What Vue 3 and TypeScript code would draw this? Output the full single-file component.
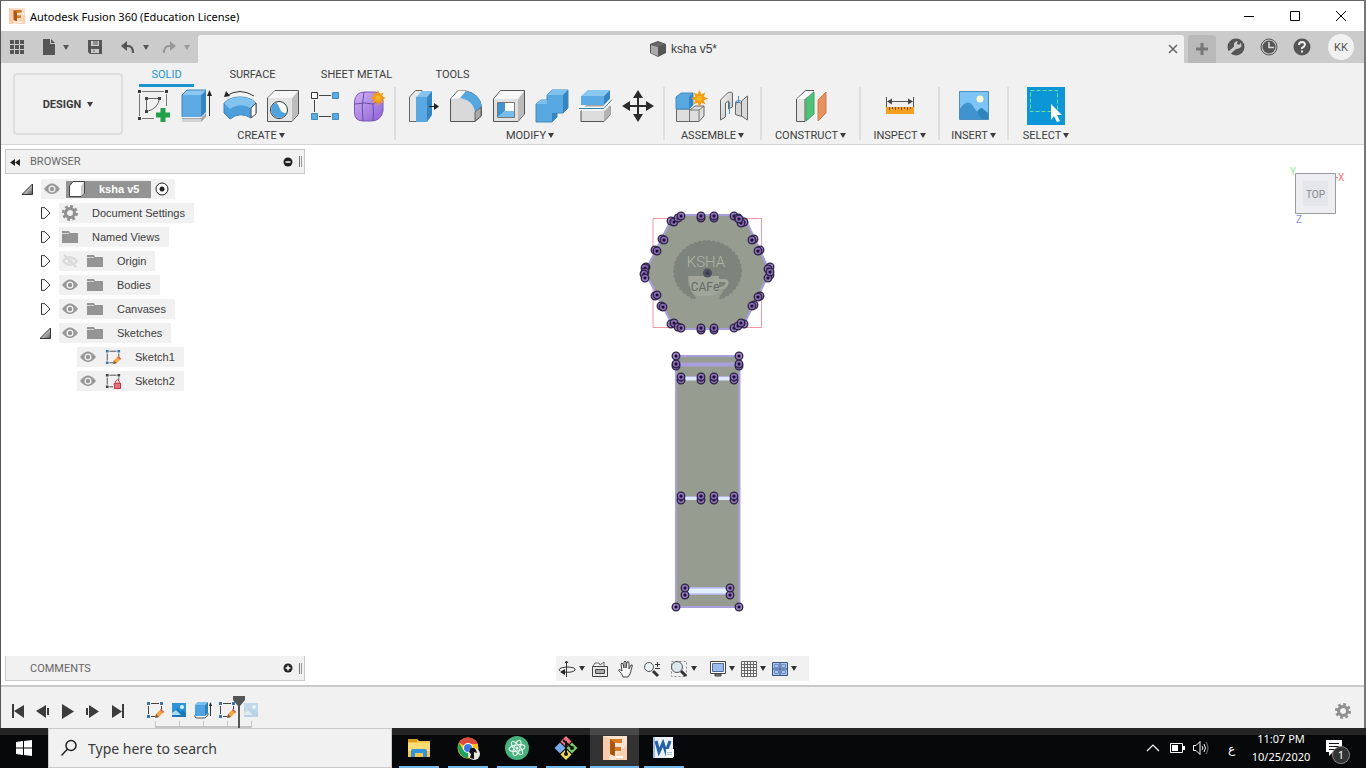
<script setup lang="ts">
import { ref } from 'vue'

interface ToolGroup {
  name: string
  cls: string
  icons: { id: string; label: string }[]
}

interface TreeNode {
  label: string
  arrow: 'closed' | 'open' | 'none'
  level: number
  icons: string[]
}

const tabs = [
  { label: 'SOLID', cls: 't-solid' },
  { label: 'SURFACE', cls: 't-surface' },
  { label: 'SHEET METAL', cls: 't-sheet' },
  { label: 'TOOLS', cls: 't-tools' },
]
const activeTab = ref('SOLID')
const query = ref('')

const groups: ToolGroup[] = [
  {
    name: 'CREATE',
    cls: 'g-create',
    icons: [
      { id: 'sketch', label: 'Create Sketch' },
      { id: 'extrude', label: 'Extrude' },
      { id: 'revolve', label: 'Revolve' },
      { id: 'hole', label: 'Hole' },
      { id: 'pattern', label: 'Pattern' },
      { id: 'form', label: 'Create Form' },
    ],
  },
  {
    name: 'MODIFY',
    cls: 'g-modify',
    icons: [
      { id: 'press', label: 'Press Pull' },
      { id: 'fillet', label: 'Fillet' },
      { id: 'shell', label: 'Shell' },
      { id: 'combine', label: 'Combine' },
      { id: 'split', label: 'Split Body' },
      { id: 'move', label: 'Move' },
    ],
  },
  {
    name: 'ASSEMBLE',
    cls: 'g-assemble',
    icons: [
      { id: 'component', label: 'New Component' },
      { id: 'joint', label: 'Joint' },
    ],
  },
  { name: 'CONSTRUCT', cls: 'g-construct', icons: [{ id: 'plane', label: 'Offset Plane' }] },
  { name: 'INSPECT', cls: 'g-inspect', icons: [{ id: 'measure', label: 'Measure' }] },
  { name: 'INSERT', cls: 'g-insert', icons: [{ id: 'canvas', label: 'Insert Canvas' }] },
  { name: 'SELECT', cls: 'g-select', icons: [{ id: 'select', label: 'Select' }] },
]

const nodes: TreeNode[] = [
  { label: 'Document Settings', arrow: 'closed', level: 1, icons: ['gear'] },
  { label: 'Named Views', arrow: 'closed', level: 1, icons: ['folder'] },
  { label: 'Origin', arrow: 'closed', level: 1, icons: ['eye-off', 'folder'] },
  { label: 'Bodies', arrow: 'closed', level: 1, icons: ['eye', 'folder'] },
  { label: 'Canvases', arrow: 'closed', level: 1, icons: ['eye', 'folder'] },
  { label: 'Sketches', arrow: 'open', level: 1, icons: ['eye', 'folder'] },
  { label: 'Sketch1', arrow: 'none', level: 2, icons: ['eye', 'sk-edit'] },
  { label: 'Sketch2', arrow: 'none', level: 2, icons: ['eye', 'sk-lock'] },
]

const navTools = [
  { id: 'orbit', label: 'Orbit', cls: 'n-orbit', caret: true },
  { id: 'lookat', label: 'Look At', cls: 'n-plain', caret: false },
  { id: 'hand', label: 'Pan', cls: 'n-plain', caret: false },
  { id: 'zoom', label: 'Zoom', cls: 'n-plain', caret: false },
  { id: 'fit', label: 'Fit', cls: 'n-fit', caret: true },
  { id: 'display', label: 'Display Settings', cls: 'n-menu', caret: true },
  { id: 'grid', label: 'Grid and Snaps', cls: 'n-menu', caret: true },
  { id: 'views', label: 'Viewports', cls: 'n-menu', caret: true },
]

const playback = [
  { id: 'first', label: 'Go to start' },
  { id: 'prev', label: 'Step back' },
  { id: 'play', label: 'Play' },
  { id: 'next', label: 'Step forward' },
  { id: 'last', label: 'Go to end' },
]
const features = ['sk-edit', 'tl-canvas', 'tl-extrude', 'sk-edit', 'tl-canvas']

const apps = [
  { id: 'explorer', label: 'File Explorer' },
  { id: 'chrome', label: 'Google Chrome' },
  { id: 'atom', label: 'Atom' },
  { id: 'git', label: 'Git' },
  { id: 'fusion', label: 'Fusion 360' },
  { id: 'word', label: 'Word' },
]

type Point = [number, number]
const hexPoints: Point[] = [
  [671, 221], [674, 222], [678, 218], [681, 216], [701, 218], [701, 216], [714, 218], [714, 216],
  [734, 216], [738, 218], [744, 222], [741, 223], [739, 219],
  [662, 239], [664, 240], [655, 250], [657, 251], [754, 239], [752, 240], [760, 250], [758, 251],
  [646, 267], [645, 268], [645, 272], [644, 274], [645, 278], [770, 267], [768, 269], [770, 275], [768, 278], [770, 272],
  [655, 296], [657, 295], [661, 306], [663, 307], [760, 296], [758, 297], [754, 305], [752, 306],
  [671, 324], [674, 323], [678, 327], [681, 328], [701, 330], [701, 328], [714, 330], [714, 328],
  [734, 328], [738, 326], [744, 324], [741, 323],
]
const bandPoints: Point[] = [
  [676, 356], [739, 356], [676, 366], [676, 364], [739, 366], [739, 364],
  ...[681, 701, 714, 734].flatMap((x): Point[] => [[x, 380], [x, 377], [x, 500], [x, 496]]),
  [685, 595], [685, 588], [730, 595], [730, 588], [676, 607], [739, 607],
]
const sketchPoints = [...hexPoints, ...bandPoints]
</script>

<template>
  <svg class="defs" aria-hidden="true">
    <defs>
      <linearGradient id="metal" x1="0" y1="0" x2="1" y2="1">
        <stop offset="0" stop-color="#f4f4f4" /><stop offset="1" stop-color="#bdbdbd" />
      </linearGradient>
      <linearGradient id="tri" x1="0" y1="0" x2="1" y2="1">
        <stop offset="0.3" stop-color="#eee" /><stop offset="1" stop-color="#555" />
      </linearGradient>
      <linearGradient id="purple" x1="0" y1="0" x2="1" y2="1">
        <stop offset="0" stop-color="#d0b4f2" /><stop offset="1" stop-color="#8c5fd6" />
      </linearGradient>
      <symbol id="star" viewBox="-8 -8 16 16">
        <path d="M0-8 1.800-4 5.600-5.600 4-1.800 8 0 4 1.800 5.600 5.600 1.800 4 0 8-1.800 4-5.600 5.600-4 1.800-8 0-4-1.800-5.600-5.600-1.800-4Z" fill="#f29d12" />
        <circle r="2.600" fill="#fdb528" />
      </symbol>

      <symbol id="sketch" viewBox="0 0 36 36">
        <path d="M6 3.500h22M3.500 6v22M30.500 6v12M6 30.500h12" stroke="#777" fill="none" />
        <path d="M2 2h3v3H2zM29 2h3v3h-3zM2 29h3v3H2z" fill="#3a3a3a" />
        <path d="M10.500 10.500h13Q22 21 10.500 23.500Z" stroke="#666" fill="none" />
        <path d="M9 9h3v3H9zM22 9h3v3h-3zM9 22h3v3H9z" fill="#444" />
        <path d="M24.500 20h5v4.500H34v5h-4.500V34h-5v-4.500H20v-5h4.500z" fill="#23a04a" />
      </symbol>
      <symbol id="extrude" viewBox="0 0 36 36">
        <path d="M3 30h19l5-5v4l-5 5H3z" fill="#a9a9a9" /><path d="M3 31h19v3H3z" fill="#d3d3d3" />
        <path d="M3 7 8 2h19l-5 5z" fill="#8cc8f3" /><path d="M3 7h19v22H3z" fill="#5eabe4" />
        <path d="m22 7 5-5v22l-5 5z" fill="#3585c0" />
        <path d="M3 29V7l5-5h19" stroke="#4586b5" fill="none" />
        <path d="M30.500 5v23" stroke="#333" /><path d="m30.500 2 2.500 6h-5z" fill="#222" />
      </symbol>
      <symbol id="revolve" viewBox="0 0 36 36">
        <path d="M4 8Q18-1 32 8" stroke="#333" fill="none" /><path d="m2 9 2-6 4 5z" fill="#222" />
        <path d="M2 15Q8 9 18 9t16 6v10l-5 5Q18 23 8 31l-6-6z" fill="#4d9fdb" stroke="#3d83b5" />
        <path d="M2 15Q8 9 18 9t16 6l-5 5Q18 14 8 21z" fill="#83c3f0" />
        <path d="m29 20 5-5v11l-5 4z" fill="#fff" stroke="#444" />
      </symbol>
      <symbol id="hole" viewBox="0 0 36 36">
        <path d="M2.500 10 10 2.500h23.500V26L27 33.500H2.500z" fill="#e3e3e3" stroke="#555" />
        <path d="M27 10 33 3v23l-6 7z" fill="#bdbdbd" /><path d="M3 10 10 3h23l-6 7z" fill="#f7f7f7" />
        <circle cx="14" cy="22" r="8.500" fill="#fff" stroke="#333" />
        <path d="M11 14.500a8 8 0 1 0 10.500 10.500Q16 25 15 21t-4-6.500z" fill="#4fa3df" />
      </symbol>
      <symbol id="pattern" viewBox="0 0 36 36">
        <path d="M11 7.500h12M6.500 12v12M11 28.500h12" stroke="#444" />
        <path d="M3.500 4.500h6v6h-6z" fill="#fff" stroke="#333" />
        <path d="M24.500 4.500h6v6h-6zM3.500 25.500h6v6h-6zM24.500 25.500h6v6h-6z" fill="#5babe5" stroke="#4589ba" />
      </symbol>
      <symbol id="form" viewBox="0 0 36 36">
        <path d="M3.500 14Q4 4 14 4h10q8 1 8 9v10q-2 10-12 10h-8q-8 0-8.500-8z" fill="url(#purple)" stroke="#7c57b8" />
        <path d="M4 16q10-2 18 0l9-6M13 4q-3 14-1 29M22 16q1 9 0 17" stroke="#6f4aae" fill="none" />
        <use href="#star" x="19" y="2" width="16" height="16" />
      </symbol>
      <symbol id="press" viewBox="0 0 36 36">
        <path d="m4.500 9 6-6.500H17V27l-6 6.500H4.500z" fill="#e8e8e8" stroke="#666" />
        <path d="m11 9 6-6h10l-5 6z" fill="#84c3f0" /><path d="M11 9h11v25H11z" fill="#5aa8e2" />
        <path d="m22 9 5-6v24l-5 7z" fill="#3484c0" />
        <path d="M24 18.500h7" stroke="#222" /><path d="m29 15 5 3.500-5 3.500z" fill="#222" />
      </symbol>
      <symbol id="fillet" viewBox="0 0 36 36">
        <path d="m2.500 11 7-8H18q14 3 15.500 16v9L27 33.500H2.500z" fill="#d9d9d9" stroke="#555" />
        <path d="m3 11 7-8h8l-6 7z" fill="#fff" />
        <path d="m12 10 6-7q14 3 16 16l-7 5q-2-12-15-14z" fill="#55a7e2" />
        <path d="m27 24 6-5v9l-6 5z" fill="#aaa" stroke="#666" />
      </symbol>
      <symbol id="shell" viewBox="0 0 36 36">
        <path d="m2.500 11 7-8.500h24V26L27 33.500H2.500z" fill="#e1e1e1" stroke="#555" />
        <path d="m27 11 6-8v23l-6 7z" fill="#bbb" /><path d="m3 11 7-8h23l-6 8z" fill="#f8f8f8" />
        <path d="M6.500 14.500h17v15h-17z" fill="#fff" stroke="#777" />
        <path d="M7 15h7v8l-7 6z" fill="#3f93cf" /><path d="M7 29h16v-6h-9z" fill="#75bcef" />
      </symbol>
      <symbol id="combine" viewBox="0 0 36 36">
        <path d="m2 16 5-4h6V7l5-5h16v18l-5 5h-6v4l-5 5H2z" fill="#57a7e1" stroke="#468bbd" />
        <path d="m13 7 5-5h16l-5 5zM2 16l5-4h6v4z" fill="#7cc0ef" />
        <path d="m29 7 5-5v18l-5 5zM18 25h5v4l-5 5z" fill="#3585c1" />
      </symbol>
      <symbol id="split" viewBox="0 0 36 36">
        <path d="m4 23 5-5h24v9l-6 6.500H4z" fill="#dcdcdc" stroke="#555" /><path d="m27 23 6-6v10l-6 6z" fill="#b4b4b4" />
        <path d="m4 8 7-6h22l-6 6z" fill="#8ac8f2" /><path d="M4 8h23v9H4z" fill="#5babe4" /><path d="m27 8 6-6v9l-6 6z" fill="#3685c0" />
        <path d="M2 20.500h25l8-9" stroke="#fff" stroke-width="4" fill="none" />
        <path d="M2 20.500h25l8-9" stroke="#2d7eb8" fill="none" />
      </symbol>
      <symbol id="move" viewBox="0 0 36 36">
        <path d="M18 7v22M7 18h22" stroke="#2b2b2b" stroke-width="2" />
        <path d="m18 2 5 8H13zM18 34l5-8H13zM2 18l8-5v10zM34 18l-8-5v10z" fill="#2b2b2b" />
      </symbol>
      <symbol id="component" viewBox="0 0 36 36">
        <path d="m17 22 5-4h9v10l-5 5.500H3.500V21H17z" fill="#dedede" stroke="#666" />
        <path d="M16.500 21v12M17 22h9v11M26 22l5-4" stroke="#777" fill="none" />
        <path d="m3 9 5-4h12v12l-4 4H3z" fill="#57a7e1" stroke="#468bbd" /><path d="m16 9 4-4v12l-4 4z" fill="#3585c1" />
        <use href="#star" x="18" y="2" width="17" height="17" />
      </symbol>
      <symbol id="joint" viewBox="0 0 36 36">
        <path d="m4.500 12 7-7q5-2 5 1v13l-4 2V13l-3 2v14l-5 3z" fill="url(#metal)" stroke="#666" />
        <path d="M19.500 14.500h4l2 1v13l-6-2z" fill="#d5d5d5" stroke="#666" />
        <path d="M13.500 14v12M22.500 8v7M20 17v-4h5" stroke="#4a90c2" fill="none" />
        <path d="m25.500 13 6-5v24l-6-4z" fill="#dadada" stroke="#666" />
      </symbol>
      <symbol id="plane" viewBox="0 0 36 36">
        <path d="m3.500 11 9-8.500H21L12 11v22.500H3.500z" fill="#e5e5e5" stroke="#555" />
        <path d="m4 11 9-8h8l-9 8z" fill="#fff" />
        <path d="m13 11 8-7v22l-8 7z" fill="#4fc27a" stroke="#3ca563" />
        <path d="m25 12 8-8v21l-8 8z" fill="#e6925f" stroke="#cf7c4c" />
      </symbol>
      <symbol id="measure" viewBox="0 0 36 36">
        <path d="M4.500 9v10M31.500 9v10M6 13.500h24" stroke="#555" />
        <path d="m5 13.500 5-3v6zM31 13.500l-5-3v6z" fill="#444" />
        <path d="M4 19h28v7H4z" fill="#f2a01d" />
        <path d="M7.500 19v3M10.500 19v2M13.500 19v3M16.500 19v2M19.500 19v3M22.500 19v2M25.500 19v3M28.500 19v2" stroke="#7a5312" />
      </symbol>
      <symbol id="canvas" viewBox="0 0 36 36">
        <path d="M3.500 3.500h29v28h-29z" fill="#7cc4f6" stroke="#4a8fc2" />
        <path d="M4 21q8-12 14-1l3 4q4-6 6-3l5 4v6H4z" fill="#2f83bd" />
        <path d="M4 21q8-12 14-1l8 11H4z" fill="#3f94cf" /><circle cx="24" cy="11" r="3.500" fill="#fdf7cf" />
      </symbol>
      <symbol id="select" viewBox="0 0 38 38">
        <path d="M0 0h38v38H0z" fill="#0c96d8" />
        <path d="M3.500 3.500h27v21h-27z" fill="none" stroke="#6fe09a" stroke-dasharray="4 2" />
        <path d="m24 17 11 11h-5l3 6-3 1-3-6-3 4z" fill="#fff" />
      </symbol>

      <symbol id="gear" viewBox="0 0 16 16">
        <circle cx="8" cy="8" r="4.500" fill="none" stroke="#8f8f8f" stroke-width="3" />
        <circle cx="8" cy="8" r="6.700" fill="none" stroke="#8f8f8f" stroke-width="2.600" stroke-dasharray="2.800 2.460" />
      </symbol>
      <symbol id="folder" viewBox="0 0 16 16">
        <path d="M0 2h7l1 2h8v10H0z" fill="#949494" /><path d="M0 4.500h7" stroke="#d6d6d6" />
      </symbol>
      <symbol id="eye" viewBox="0 0 16 16">
        <path d="M0 8q8-11 16 0-8 10-16 0z" fill="#979797" />
        <circle cx="8" cy="8" r="3.500" fill="#f1f1f1" /><circle cx="8" cy="8" r="2.200" fill="#979797" />
      </symbol>
      <symbol id="eye-off" viewBox="0 0 16 16">
        <path d="M1 8q7-8 14 0-7 8-14 0z" fill="none" stroke="#dadada" stroke-width="2" />
        <circle cx="8" cy="8" r="2.500" fill="#dadada" /><path d="m2 2 12 12" stroke="#dadada" stroke-width="2" />
      </symbol>
      <symbol id="sk-edit" viewBox="0 0 18 18">
        <path d="M5 2.500h8M2.500 5v8M15.500 5v5M5 15.500h4" stroke="#444" />
        <path d="M1 1h3v3H1zM14 1h3v3h-3zM1 14h3v3H1z" fill="#3d74a8" />
        <path d="m9 17 1-4 5-5 3 3-5 5z" fill="#f0a848" /><path d="m9 17 1-4 3 3z" fill="#7c5a4a" /><path d="m15 8 3 3-1 1-3-3z" fill="#d6574f" />
      </symbol>
      <symbol id="sk-lock" viewBox="0 0 18 18">
        <path d="M5 2.500h8M2.500 5v8M15.500 5v3M5 15.500h4" stroke="#444" />
        <path d="M1 1h3v3H1zM14 1h3v3h-3zM1 14h3v3H1z" fill="#444" />
        <path d="M10.500 17.500v-6h7v6z" fill="#e87380" stroke="#b81f33" /><path d="M12 11V9q2-3 4 0v2" fill="none" stroke="#b81f33" />
      </symbol>
      <symbol id="tl-canvas" viewBox="0 0 18 18">
        <path d="M2 2h14v14H2z" fill="#2d95d6" /><path d="m2 12 5-5 4 4 2-2 3 3v4H2z" fill="#1c78b4" />
        <path d="m2 12 4-3 5 5H2z" fill="#a8dcf8" /><circle cx="12" cy="6" r="2" fill="#d9f1ff" />
      </symbol>
      <symbol id="tl-extrude" viewBox="0 0 18 18">
        <path d="M1 14v2q1 1 2 1h8l3-3v-2" fill="none" stroke="#555" />
        <path d="m1 4 3-3h10v11l-3 3H1z" fill="#4fa3df" /><path d="m11 4 3-3v11l-3 3z" fill="#3280ba" />
        <path d="m1 4 3-3h10l-3 3z" fill="#7cc0ef" /><path d="M16.500 3v12" stroke="#333" /><path d="m16.500 1 1.500 4h-3z" fill="#222" />
      </symbol>

      <symbol id="orbit" viewBox="0 0 18 18">
        <path d="M8.500 1v16M7 3l1.500-2L10 3M2 11Q-1 8 8 7q10 0 9 3-2 3-11 2" fill="none" stroke="#333" />
        <path d="m2 12 5-3v6z" fill="#222" />
      </symbol>
      <symbol id="lookat" viewBox="0 0 18 18">
        <path d="M1.500 6.500h15v10h-15z" fill="#e8e8e8" stroke="#444" /><path d="M4.500 9.500h9v4h-9z" fill="#aaa" stroke="#444" />
        <path d="m2 6 2-3h4l1 2 4-3v4" fill="none" stroke="#666" />
      </symbol>
      <symbol id="hand" viewBox="0 0 18 18">
        <path d="M6 17q-1-4-4-6-1-3 3 0L4 4q1-2 2 0l1 4V2q1-2 2 0v6l1-6q2-1 2 1v6l2-4q2-1 1 2l-2 7-2 3z" fill="#fafafa" stroke="#444" />
      </symbol>
      <symbol id="zoom" viewBox="0 0 18 18">
        <circle cx="6" cy="7" r="4.500" fill="#e9f1f4" stroke="#555" /><path d="m10 11 5 5" stroke="#333" stroke-width="3" />
        <path d="M12 4.500h5M14.500 2v5M12 8.500h5" stroke="#333" />
      </symbol>
      <symbol id="fit" viewBox="0 0 18 18">
        <path d="M1.500 1.500h15v15h-15z" fill="none" stroke="#888" stroke-dasharray="2 2" />
        <circle cx="7" cy="7" r="5.500" fill="#dce9ec" stroke="#555" /><path d="m11 11 5 5" stroke="#333" stroke-width="3" />
      </symbol>
      <symbol id="display" viewBox="0 0 18 18">
        <path d="M1.500 1.500h15v12h-15z" fill="#fff" stroke="#444" /><path d="M3.500 3.500h11v8h-11z" fill="#9bbceb" stroke="#4e6c9c" />
        <path d="M6 14h6v2H6z" fill="#888" stroke="#444" />
      </symbol>
      <symbol id="grid" viewBox="0 0 18 18">
        <path d="M1.500 1.500h15v15h-15zM4.500 1v15M7.500 1v15M10.500 1v15M13.500 1v15M1 4.500h15M1 7.500h15M1 10.500h15M1 13.500h15" fill="#f7f7f7" stroke="#666" />
      </symbol>
      <symbol id="views" viewBox="0 0 18 18">
        <path d="M1.500 2.500h15v13h-15zM1 9h16M9 3v12" fill="#a6c4ee" stroke="#3b547e" />
        <path d="M3.500 4.500h4v3h-4zM10.500 4.500h4v3h-4zM3.500 10.500h4v3h-4zM10.500 10.500h4v3h-4z" fill="none" stroke="#6d8fc4" />
      </symbol>

      <symbol id="first" viewBox="0 0 18 18"><path d="M3 2h2v14H3zM15 3v13L5 9z" fill="#3c3c3c" /></symbol>
      <symbol id="prev" viewBox="0 0 18 18"><path d="M12 3v13L2 9zM13 6h2v7h-2z" fill="#3c3c3c" /></symbol>
      <symbol id="play" viewBox="0 0 18 18"><path d="m3 2 12 7.500L3 17z" fill="#3c3c3c" /></symbol>
      <symbol id="next" viewBox="0 0 18 18"><path d="m5 3 10 6.500L5 16zM2 6h2v7H2z" fill="#3c3c3c" /></symbol>
      <symbol id="last" viewBox="0 0 18 18"><path d="m3 3 10 6.500L3 16zM13 2h2v14h-2z" fill="#3c3c3c" /></symbol>

      <symbol id="fusion" viewBox="0 0 24 24">
        <path d="M0 0h24v24H0z" fill="#fbe3cf" /><path d="m0 0 8 3-2 21H0z" fill="#f8ccaa" /><path d="M14 18 24 9v15H13z" fill="#f8d0af" />
        <path d="M7 3h12v4h-7v4h6v4h-6v5l-5-2z" fill="#d97a26" /><path d="m7 3 5 4v13l-5-2z" fill="#a85710" />
        <path d="M13 20h7v2h-7z" fill="#fff" />
      </symbol>
      <symbol id="explorer" viewBox="0 0 24 24">
        <path d="M1 3h9l2 2h11v16H1z" fill="#f5c64c" /><path d="M1 3h9v3H1z" fill="#d99b1f" /><path d="M1 7h22v8H1z" fill="#ffdc74" />
        <path d="M4 21v-6q0-2 2-2h12q2 0 2 2v6h-4v-4H8v4z" fill="#2f94dc" />
      </symbol>
      <symbol id="chrome" viewBox="0 0 24 24">
        <circle cx="12" cy="12" r="10.500" fill="#fbc116" /><path d="M12 12 3 6.500Q6 1.500 12 1.500q7 0 10 6.500H12z" fill="#dd4b3e" />
        <path d="M3 6.500q-4 12 8 16L16 14H7z" fill="#1da261" /><circle cx="12" cy="12" r="5" fill="#fff" /><circle cx="12" cy="12" r="4" fill="#3b78e7" />
        <circle cx="18" cy="18" r="6" fill="#e7e7e2" /><path d="M14 13q4-3 6 1l1 3-3-1v7l-4-1 1-4-2-2z" fill="#111" />
      </symbol>
      <symbol id="atom" viewBox="0 0 24 24">
        <circle cx="12" cy="12" r="12" fill="#46b17b" />
        <g fill="none" stroke="#e9f7ef"><ellipse cx="12" cy="12" rx="3" ry="8" transform="rotate(20 12 12)" /><ellipse cx="12" cy="12" rx="3" ry="8" transform="rotate(80 12 12)" /><ellipse cx="12" cy="12" rx="3" ry="8" transform="rotate(140 12 12)" /></g>
        <circle cx="12" cy="12" r="1.500" fill="#fff" />
      </symbol>
      <symbol id="git" viewBox="0 0 24 24">
        <path d="m12 0 5.500 5.500L12 11 6.500 5.500z" fill="#f0727a" /><path d="m6 6.500 5.500 5.500L6 17.500.5 12z" fill="#79a9e8" />
        <path d="m18 6.500 5.500 5.500-5.500 5.500-5.500-5.500z" fill="#7cc867" /><path d="m12 13 5.500 5.500L12 24l-5.500-5.500z" fill="#f3dc57" />
        <path d="M12 5v14M9 4l9 8" stroke="#151515" stroke-width="2" /><circle cx="12" cy="18" r="2" fill="#151515" /><circle cx="18" cy="12" r="2" fill="#151515" />
      </symbol>
      <symbol id="word" viewBox="0 0 24 24">
        <path d="M1 1h20v21H1z" fill="#e9f0f8" /><path d="M1 1h2v21H1z" fill="#9ec0e6" />
        <path d="m4 5 3 11 4-9 3 9 4-11" fill="none" stroke="#2360a8" stroke-width="3" />
        <path d="M14 13h8v8h-8z" fill="#f7fafd" /><path d="M15 16.500h5M15 18.500h5" stroke="#a9c3df" />
      </symbol>
    </defs>
  </svg>

  <div class="desktop">
    <main class="window">
      <header class="titlebar">
        <svg class="i16"><use href="#fusion" /></svg>
        <h1>Autodesk Fusion 360 (Education License)</h1>
        <button class="win" aria-label="Minimize"><svg class="i12" viewBox="0 0 12 12"><path d="M1 6.500h10" stroke="#000" /></svg></button>
        <button class="win" aria-label="Maximize"><svg class="i12" viewBox="0 0 12 12"><path d="M1.500 1.500h9v9h-9z" stroke="#000" fill="none" /></svg></button>
        <button class="win" aria-label="Close"><svg class="i12" viewBox="0 0 12 12"><path d="m1 1 10 10M11 1 1 11" stroke="#000" /></svg></button>
      </header>

      <div class="appbar">
        <div class="quick">
          <button class="q1" aria-label="Data panel"><svg class="i16" viewBox="0 0 16 16"><path d="M1 1h4v4H1zM6 1h4v4H6zM11 1h4v4h-4zM1 6h4v4H1zM6 6h4v4H6zM11 6h4v4h-4zM1 11h4v4H1zM6 11h4v4H6zM11 11h4v4h-4z" fill="#555" /></svg></button>
          <button class="q2" aria-label="File"><svg class="i16" viewBox="0 0 16 16"><path d="M2 0h7v5h5v11H2zM10 0l4 4h-4z" fill="#555" /></svg><i class="caret"></i></button>
          <button class="q3" aria-label="Save"><svg class="i16" viewBox="0 0 16 16"><path d="M1 1h14v14H3l-2-2zM4 2v5h8V2zM4 10v4h8v-4z" fill="#555" fill-rule="evenodd" /><path d="M6 3h5M6 5h5M6 12h2" stroke="#555" /></svg></button>
          <button class="q4" aria-label="Undo"><svg class="i16" viewBox="0 0 16 16"><path d="M3 7h5q5 0 5 7" stroke="#555" stroke-width="2" fill="none" /><path d="m1 7 6-5v10z" fill="#555" /></svg><i class="caret"></i></button>
          <button class="q5" aria-label="Redo"><svg class="i16" viewBox="0 0 16 16"><path d="M13 7H8q-5 0-5 7" stroke="#999" stroke-width="2" fill="none" /><path d="M15 7 9 2v10z" fill="#999" /></svg><i class="caret"></i></button>
        </div>
        <div class="doc">
          <span class="docname">
            <svg class="i16" viewBox="0 0 16 16"><path d="m0 3 8-3 8 3v9l-8 4-8-4z" fill="#555" /><path d="m1 4 7 2v9l-7-3z" fill="#aaa" /><path d="m1 3 7-2 7 2-7 3z" fill="#686868" /></svg>
            ksha v5*
          </span>
          <button aria-label="Close document"><svg class="i12" viewBox="0 0 12 12"><path d="m2 2 8 8M10 2l-8 8" stroke="#666" stroke-width="1.500" /></svg></button>
        </div>
        <button class="plus" aria-label="New document"><svg class="i16" viewBox="0 0 16 16"><path d="M8 2v12M2 8h12" stroke="#777" stroke-width="3" /></svg></button>
        <div class="status">
          <button aria-label="Extensions"><svg class="i18" viewBox="0 0 18 18"><circle cx="9" cy="9" r="8.500" fill="#555" /><path d="m2 15 7-6" stroke="#cbcbcb" stroke-width="3" /><path d="M14 5q-1 0-2 2l-2-1q0-2 1-3-5 0-4 6 2 4 7 0 1-1 0-4z" fill="#cbcbcb" /></svg></button>
          <button aria-label="Job status"><svg class="i18" viewBox="0 0 18 18"><circle cx="9" cy="9" r="8" fill="none" stroke="#555" /><circle cx="9" cy="9" r="6.500" fill="#555" /><path d="M9 4v5.500h5" stroke="#ddd" stroke-width="1.500" fill="none" /></svg></button>
          <button aria-label="Help"><svg class="i18" viewBox="0 0 18 18"><circle cx="9" cy="9" r="8.500" fill="#555" /><path d="M6 7q0-3 3-3t3 2.500Q12 8 9 10v1M9 12.500v2" stroke="#eee" stroke-width="2" fill="none" /></svg></button>
          <button class="avatar">KK</button>
        </div>
      </div>

      <section class="ribbon">
        <button class="design">DESIGN <i class="caret"></i></button>
        <div class="ribbonbody">
          <nav class="tabs">
            <button v-for="t in tabs" :key="t.label" :class="[t.cls, { active: t.label === activeTab }]" @click="activeTab = t.label"><span>{{ t.label }}</span></button>
          </nav>
          <div class="groups">
            <div v-for="g in groups" :key="g.name" class="group" :class="g.cls">
              <div class="tools">
                <button v-for="i in g.icons" :key="i.id" :aria-label="i.label"><svg class="tool"><use :href="'#' + i.id" /></svg></button>
              </div>
              <button class="gname">{{ g.name }} <i class="caret"></i></button>
            </div>
          </div>
        </div>
      </section>

      <section class="viewport">
        <svg class="model" viewBox="628 145 160 480" role="img" aria-label="Sketch geometry">
          <path d="M653 218.500h108.500v109H653z" fill="none" stroke="#ef8088" stroke-opacity="0.8" />
          <path d="M678 215h62l6 5 24 52-26 52-6 5h-60l-6-5-27-52 26-52z" fill="#979c90" stroke="#a79fdc" stroke-width="2" />
          <ellipse cx="707.500" cy="271" rx="33" ry="29" fill="#7d847c" />
          <ellipse cx="707.500" cy="271" rx="32" ry="28.500" fill="none" stroke="#7d847c" stroke-width="5" stroke-linecap="round" stroke-dasharray="0 4.500" />
          <path d="M690 290h34l-5 8 5 6h-33l5-6z" fill="#979c90" />
          <path d="M688 276h31v15q-2 5-8 5h-14q-9-6-9-20z" fill="#a0a599" />
          <path d="M719 280.500h5q4 0 3 3-1 5-8 5" fill="none" stroke="#a0a599" stroke-width="3" />
          <text x="706" y="267" text-anchor="middle" class="logo top">KSHA</text>
          <text x="705" y="291" text-anchor="middle" class="logo low">CAFe</text>
          <circle cx="707.500" cy="273" r="4.500" fill="#4f5260" /><circle cx="707.500" cy="273" r="2" fill="#3c3d4d" />
          <path d="M676 356h63.500v251H676z" fill="#979c90" stroke="#a79fdc" stroke-width="2" />
          <path d="M677 364.500h62" stroke="#a79fdc" stroke-width="4" />
          <path d="M682 378.500h19M714 378.500h19M682 498h19M714 498h19" stroke="#dce8fb" stroke-width="4" />
          <path d="M682 376.500h19M714 376.500h19M682 496.500h19M714 496.500h19" stroke="#b3b0e5" />
          <path d="M686 591h44" stroke="#b3b0e5" stroke-width="8" /><path d="M686 591h44" stroke="#e2effd" stroke-width="5" />
          <g v-for="(p, n) in sketchPoints" :key="n">
            <circle :cx="p[0]" :cy="p[1]" r="3.800" fill="#8c6cb8" fill-opacity="0.85" stroke="#2d2247" stroke-width="1.300" />
            <circle :cx="p[0]" :cy="p[1]" r="1.500" fill="#160b2a" />
          </g>
        </svg>

        <svg class="cube" viewBox="1286 160 64 70" role="img" aria-label="View cube">
          <path d="M1295.500 173.500h40v40h-40z" fill="#eeeef0" stroke="#9a9aa2" /><path d="M1303 181h25v25h-25z" fill="#e4e6ea" />
          <text x="1315.500" y="198" text-anchor="middle" fill="#85878d" class="face">TOP</text>
          <text x="1290" y="175" fill="#8df08d" class="axis">Y</text>
          <text x="1338" y="181" fill="#f77" class="axis">X</text>
          <text x="1296" y="223" fill="#8a8cf5" class="axis">Z</text>
          <path d="M1336 177.500h2" stroke="#f77" />
        </svg>

        <div class="panel">
          <button aria-label="Collapse browser"><svg class="i12" viewBox="0 0 12 12"><path d="m5 3-5 3.500L5 10zM10 3 5 6.500l5 3.500z" fill="#222" /></svg></button>
          <h2>BROWSER</h2>
          <button aria-label="Minimize browser"><svg class="i10" viewBox="0 0 10 10"><circle cx="5" cy="5" r="4.500" fill="#222" /><path d="M2.500 5h5" stroke="#fff" stroke-width="1.500" /></svg></button>
          <i class="grip"></i>
        </div>

        <div class="tree" role="tree">
          <div class="row root" role="treeitem">
            <button class="twist" aria-label="Collapse"><svg class="i12" viewBox="0 0 12 12"><path d="M11.500 1v10.500H1z" fill="url(#tri)" stroke="#333" /></svg></button>
            <div class="item">
              <svg class="i16"><use href="#eye" /></svg>
              <span class="picked">
                <svg class="i16" viewBox="0 0 16 16"><path d="M.5 5 4 .5h11.500V12L12 15.500H.5z" fill="#fff" stroke="#444" /><path d="m12 5 3-4v11l-3 3z" fill="#ccc" /></svg>
                <b>ksha v5</b>
              </span>
              <svg class="i14" viewBox="0 0 14 14"><circle cx="7" cy="7" r="6" fill="#fff" stroke="#222" /><circle cx="7" cy="7" r="2.500" fill="#222" /></svg>
            </div>
          </div>
          <div v-for="n in nodes" :key="n.label" class="row" :class="'level' + n.level" role="treeitem">
            <button v-if="n.arrow !== 'none'" class="twist" :aria-label="'Toggle ' + n.label">
              <svg v-if="n.arrow === 'closed'" class="i12" viewBox="0 0 12 12"><path d="M1.500.5 5 .8 10 6l-5 5.200-3.500.3z" fill="#fff" stroke="#333" /></svg>
              <svg v-else class="i12" viewBox="0 0 12 12"><path d="M10.500 1v10.500H0z" fill="url(#tri)" stroke="#333" /></svg>
            </button>
            <div class="item">
              <svg v-for="i in n.icons" :key="i" class="i16"><use :href="'#' + i" /></svg>
              <span class="name">{{ n.label }}</span>
            </div>
          </div>
        </div>

        <div class="bottom">
          <div class="panel comments">
            <h2>COMMENTS</h2>
            <button aria-label="Expand comments"><svg class="i10" viewBox="0 0 10 10"><circle cx="5" cy="5" r="4.500" fill="#222" /><path d="M2.500 5h5M5 2.500v5" stroke="#fff" stroke-width="1.500" /></svg></button>
            <i class="grip"></i>
          </div>
          <div class="navbar">
            <button v-for="t in navTools" :key="t.id" :class="t.cls" :aria-label="t.label"><svg class="i18"><use :href="'#' + t.id" /></svg><i v-if="t.caret" class="caret"></i></button>
          </div>
        </div>
      </section>

      <section class="timeline">
        <div class="play">
          <button v-for="p in playback" :key="p.id" :aria-label="p.label"><svg class="i18"><use :href="'#' + p.id" /></svg></button>
        </div>
        <div class="features">
          <button v-for="(f, n) in features" :key="n" :class="{ off: n === 4 }" :aria-label="'Feature ' + (n + 1)"><svg class="i18"><use :href="'#' + f" /></svg></button>
          <svg class="marker" viewBox="0 0 12 32"><path d="M0 0h12v4L7 10v22H5V10L0 4z" fill="#555" /></svg>
        </div>
        <button class="settings" aria-label="Timeline settings"><svg class="i16"><use href="#gear" /></svg></button>
      </section>
    </main>

    <footer class="taskbar">
      <button class="start" aria-label="Start"><svg class="i16" viewBox="0 0 16 16"><path d="m0 2 7-1v6.500H0zM8 1l8-1v7.500H8zM0 8.500h7V15l-7-1zM8 8.500h8V16l-8-1z" fill="#fff" /></svg></button>
      <label class="search">
        <svg class="i18" viewBox="0 0 18 18"><circle cx="11" cy="6.500" r="5" fill="none" stroke="#222" stroke-width="1.500" /><path d="m7.500 10-6 6.500" stroke="#222" stroke-width="1.500" /></svg>
        <input v-model="query" type="text" placeholder="Type here to search" aria-label="Search" />
      </label>
      <div class="apps">
        <button v-for="a in apps" :key="a.id" :class="{ current: a.id === 'fusion' }" :aria-label="a.label"><svg class="i24"><use :href="'#' + a.id" /></svg></button>
      </div>
      <div class="tray">
        <button aria-label="Show hidden icons"><svg class="i16" viewBox="0 0 16 16"><path d="m2 11 6-6 6 6" stroke="#fff" fill="none" stroke-width="1.200" /></svg></button>
        <button aria-label="Battery"><svg class="i16" viewBox="0 0 16 16"><path d="M1.500 3.500h12v9h-12z" stroke="#fff" fill="none" /><path d="M3 5h6v6H3zM14 6h2v4h-2z" fill="#fff" /></svg></button>
        <button aria-label="Volume"><svg class="i16" viewBox="0 0 16 16"><path d="M.500 5.500H3l4-4v13l-4-4H.500z" stroke="#fff" fill="none" /><path d="M9 6q2 2 0 4M11 4q3 4 0 8" stroke="#fff" fill="none" /><path d="M13 2q4 6 0 12" stroke="#777" fill="none" /></svg></button>
        <button class="lang" aria-label="Input language">ع</button>
        <button class="clock"><span>11:07 PM</span><span>10/25/2020</span></button>
        <button class="notes" aria-label="Notifications"><svg class="note" viewBox="0 0 18 18"><path d="M1 1h16v12H8l-4 4v-4H1z" fill="#fff" /><path d="M4 4.500h10M4 7.500h10M4 10.500h6" stroke="#111" /></svg><span class="badge">1</span></button>
      </div>
    </footer>
  </div>
</template>

<style>
html, body { margin: 0; background: #fff; }
</style>

<style scoped>
.defs { position: absolute; width: 0; height: 0; }
.desktop { display: flex; flex-direction: column; min-height: 100vh; font-family: Roboto, "Liberation Sans", sans-serif; font-size: 11px; color: #3c3c3c; }
button { appearance: none; border: 0; margin: 0; padding: 0; background: none; color: inherit; font: inherit; display: flex; align-items: center; justify-content: center; }
svg { display: block; flex: none; }
h1, h2 { margin: 0; font-weight: 400; }
.i10 { width: 10px; height: 10px; }
.i12 { width: 12px; height: 12px; }
.i14 { width: 14px; height: 14px; }
.i16 { width: 16px; height: 16px; }
.i18 { width: 18px; height: 18px; }
.i24 { width: 24px; height: 24px; }
.caret { border: 3px solid transparent; border-top: 5px solid currentColor; border-bottom: 0; flex: none; }

.window { flex: 1; display: flex; flex-direction: column; border-left: 1px solid #555; border-right: 2px solid #777; border-top: 1px solid #666; box-sizing: border-box; }
.titlebar { height: 30px; display: flex; align-items: center; padding-left: 8px; background: #fff; }
.titlebar h1 { flex: 1; margin-left: 5px; font: 11px "Noto Sans", "Open Sans", sans-serif; color: #000; }
.win { width: 46px; height: 30px; }

.appbar { height: 32px; display: flex; background: #cbcbcb; box-sizing: border-box; padding-top: 4px; }
.quick { width: 197px; display: flex; align-items: center; color: #555; margin-top: -4px; padding-left: 8px; box-sizing: border-box; }
.quick button { gap: 5px; height: 32px; justify-content: flex-start; }
.quick .q1 { width: 32px; }
.quick .q2 { width: 46px; gap: 6px; }
.quick .q3 { width: 33px; }
.quick .q4 { width: 41px; gap: 7px; }
.quick .q5 { width: 34px; gap: 7px; color: #999; }
.doc { flex: 1; display: flex; align-items: center; background: #f1f1f1; border-radius: 3px 3px 0 0; padding: 0 5px 0 2px; font: 12px "Liberation Sans", sans-serif; }
.docname { flex: 1; display: flex; align-items: center; justify-content: center; gap: 5px; }
.plus { width: 28px; margin-left: 4px; background: #b9b9b9; border-radius: 3px 3px 0 0; }
.status { display: flex; align-items: center; margin: -4px 10px 0 11px; gap: 15px; }
.avatar { width: 26px; height: 26px; border-radius: 50%; background: #f1f1f1; margin-left: 2px; color: #555; }

.ribbon { display: flex; background: #f1f1f1; border-bottom: 1px solid #d4d4d4; padding-left: 12px; }
.design { width: 110px; height: 62px; margin-top: 10px; box-sizing: border-box; border: 2px solid #dedede; border-radius: 4px; font-weight: 700; gap: 6px; }
.tabs { display: flex; height: 24px; padding-left: 16px; }
.tabs button { border-bottom: 3px solid transparent; box-sizing: border-box; height: 24px; padding-top: 2px; }
.tabs .active { color: #1b93cf; border-color: #1b93cf; }
.t-solid { width: 55px; }
.t-surface { width: 117px; }
.t-sheet { width: 91px; }
.t-tools { width: 101px; }
.groups { display: flex; height: 57px; }
.group { height: 53px; display: flex; flex-direction: column; align-items: center; border-right: 2px solid #dedede; box-sizing: border-box; }
.tools { display: flex; flex: none; height: 38px; align-items: center; }
.tools button { width: 43px; }
.tool { width: 36px; height: 36px; }
.gname { flex: none; gap: 2px; height: 20px; }
.g-create { width: 273px; padding-left: 5px; }
.g-modify { width: 269px; padding-left: 1px; }
.g-assemble { width: 97px; }
.g-construct { width: 99px; }
.g-inspect { width: 79px; }
.g-insert { width: 69px; }
.g-select { width: 74px; border-right: 0; }
.g-select .tool { width: 38px; height: 38px; }

.viewport { position: relative; flex: 1; display: flex; flex-direction: column; padding: 4px 4px; background: #fff; }
.model { position: absolute; top: 0; left: calc(50% - 55px); width: 160px; height: 480px; }
.logo { font-family: Roboto, sans-serif; font-weight: 300; }
.top { font-size: 15px; fill: #b0b5a9; }
.low { font-size: 12px; font-weight: 400; fill: #646b64; }
.cube { position: absolute; top: 15px; right: 14px; width: 64px; height: 70px; }
.face, .axis { font: 10px Roboto, sans-serif; }
.panel { width: 300px; height: 25px; box-sizing: border-box; display: flex; align-items: center; background: #f1f1f1; border: 1px solid #c8c8c8; padding: 0 2px 0 4px; color: #666; }
.panel h2 { flex: 1; font-size: 11px; margin-left: 8px; }
.grip { width: 1px; height: 11px; margin-left: 6px; border-left: 1px solid #777; border-right: 1px solid #999; }
.tree { margin-top: 5px; font: 11px "Liberation Sans", sans-serif; }
.row { display: flex; height: 20px; margin-bottom: 4px; }
.root { padding-left: 16px; }
.level1 { padding-left: 34px; }
.level2 { padding-left: 72px; }
.twist { width: 12px; margin-right: 8px; }
.level1 .twist { width: 14px; margin-right: 6px; }
.item { display: flex; align-items: center; gap: 9px; background: #f1f1f1; padding: 0 9px 0 3px; }
.root .item { gap: 6px; padding-right: 6px; }
.picked { display: flex; align-items: center; gap: 14px; height: 17px; background: #939393; color: #fff; padding: 0 12px 0 3px; }
.root .i14 { margin-left: -2px; }
.name { margin-left: 5px; }
.bottom { margin-top: auto; display: grid; grid-template-columns: 1fr auto 1fr; }
.comments { border-top: 0; }
.comments h2 { margin-left: 20px; }
.navbar { display: flex; background: #f1f1f1; padding-right: 10px; color: #333; }
.n-orbit { width: 31px; }
.n-plain { width: 26px; }
.n-fit { width: 36px; margin-right: 5px; }
.n-menu { width: 31px; }
.navbar .n-orbit, .navbar .n-fit { gap: 3px; }
.navbar .n-menu { gap: 2px; }

.timeline { height: 43px; display: flex; align-items: center; box-sizing: border-box; border-top: 2px solid #c9c9c9; background: #f1f1f1; padding: 0 13px 0 4px; }
.play { display: flex; }
.play button { width: 25px; height: 25px; margin-top: 7px; }
.features { position: relative; display: flex; height: 41px; margin-left: 13px; }
.features button { width: 24px; padding-top: 5px; align-items: center; }
.features::after { content: ""; position: absolute; left: 12px; right: 12px; bottom: 0; height: 2px; background: #c6c6c6; }
.features::before { content: ""; position: absolute; left: 12px; right: 11px; bottom: 0; height: 7px; background: repeating-linear-gradient(90deg, #c6c6c6 0 1px, transparent 1px 24px); }
.off svg { opacity: 0.25; }
.marker { position: absolute; z-index: 1; left: 90px; bottom: 0; width: 12px; height: 32px; }
.settings { margin-left: auto; margin-top: 7px; }

.taskbar { height: 40px; display: flex; background: linear-gradient(#242424 0 7px, #070809 7px); color: #fff; font: 11px "Noto Sans", "Open Sans", sans-serif; }
.start { width: 48px; }
.search { width: 344px; box-sizing: border-box; display: flex; align-items: center; gap: 10px; padding-left: 11px; background: #f1f1f1; border: 1px solid #c8c8c8; }
.search input { flex: 1; min-width: 0; border: 0; outline: 0; padding: 0; background: none; font: 14px "Noto Sans", "Open Sans", sans-serif; color: #333; }
.search input::placeholder { color: #3a3a3a; opacity: 1; }
.apps { display: flex; margin-left: 2px; }
.apps button { position: relative; width: 49px; }
.apps button::after { content: ""; position: absolute; left: 5px; right: 4px; bottom: 0; height: 2px; background: #76b9ed; }
.apps .current { background: linear-gradient(#484848 0 7px, #333 7px); }
.apps .current::after { left: 0; right: 0; }
.tray { margin-left: auto; display: flex; }
.tray button { width: 24px; }
.tray .lang { width: 36px; font-size: 12px; }
.tray .clock { width: 64px; flex-direction: column; line-height: 18px; }
.tray .notes { position: relative; width: 53px; padding-right: 12px; box-sizing: border-box; }
.note { width: 18px; height: 18px; }
.badge { position: absolute; left: 20px; top: 19px; width: 16px; height: 16px; line-height: 16px; border-radius: 50%; background: #333; box-shadow: 0 0 0 1px #888; font-size: 11px; text-align: center; }
</style>
